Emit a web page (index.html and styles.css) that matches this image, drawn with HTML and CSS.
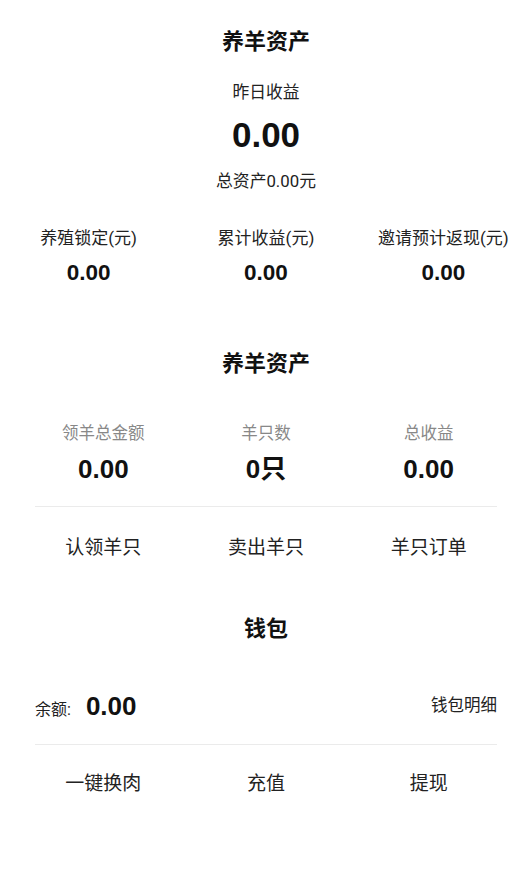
FILE: index.html
```html
<!DOCTYPE html>
<html lang="zh-CN">
<head>
<meta charset="utf-8">
<title>养羊资产</title>
<link rel="stylesheet" href="styles.css">
</head>
<body>
<div class="page">
  <section class="assets">
    <h1 class="title title-top">养羊资产</h1>
    <div class="sub">昨日收益</div>
    <div class="big">0.00</div>
    <div class="total">总资产0.00元</div>
    <div class="stats">
      <div class="stat">
        <div class="stat-label">养殖锁定(元)</div>
        <div class="stat-value">0.00</div>
      </div>
      <div class="stat">
        <div class="stat-label">累计收益(元)</div>
        <div class="stat-value">0.00</div>
      </div>
      <div class="stat">
        <div class="stat-label">邀请预计返现(元)</div>
        <div class="stat-value">0.00</div>
      </div>
    </div>
  </section>

  <section class="sheep">
    <h2 class="title title-second">养羊资产</h2>
    <div class="cols sheep-stats">
      <div class="col">
        <div class="col-label">领羊总金额</div>
        <div class="col-value">0.00</div>
      </div>
      <div class="col">
        <div class="col-label">羊只数</div>
        <div class="col-value">0只</div>
      </div>
      <div class="col">
        <div class="col-label">总收益</div>
        <div class="col-value">0.00</div>
      </div>
    </div>
    <div class="divider divider-sheep"></div>
    <div class="cols actions actions-sheep">
      <div class="action">认领羊只</div>
      <div class="action">卖出羊只</div>
      <div class="action">羊只订单</div>
    </div>
  </section>

  <section class="wallet">
    <h2 class="title title-wallet">钱包</h2>
    <div class="balance-row">
      <div class="balance">
        <span class="balance-label">余额:</span>
        <span class="balance-value">0.00</span>
      </div>
      <div class="wallet-detail">钱包明细</div>
    </div>
    <div class="divider divider-wallet"></div>
    <div class="cols actions actions-wallet">
      <div class="action">一键换肉</div>
      <div class="action">充值</div>
      <div class="action">提现</div>
    </div>
  </section>
</div>
</body>
</html>
```
FILE: styles.css
```css
html, body {
  margin: 0;
  padding: 0;
  background: #ffffff;
}

body {
  font-family: Roboto, "Noto Sans CJK SC", sans-serif;
  color: #222;
  width: 532px;
}

.page {
  display: flex;
  flex-direction: column;
  text-align: center;
}

.title {
  margin: 0;
  font-size: 22px;
  line-height: 30px;
  font-weight: bold;
  color: #111;
}

.title-top { margin-top: 27px; }

.sub {
  margin-top: 23px;
  font-size: 16.8px;
  line-height: 24px;
  color: #222;
}

.big {
  margin-top: 11px;
  font-family: "Liberation Sans", "Noto Sans CJK SC", sans-serif;
  font-size: 35px;
  line-height: 40px;
  font-weight: bold;
  color: #111;
}

.total {
  margin-top: 14px;
  font-size: 16.8px;
  line-height: 24px;
  color: #222;
}

.stats {
  margin-top: 33px;
  display: grid;
  grid-template-columns: repeat(3, 1fr);
}

.stat-label {
  font-size: 17px;
  line-height: 24px;
  color: #222;
}

.stat-value {
  margin-top: 8px;
  font-family: "Liberation Sans", "Noto Sans CJK SC", sans-serif;
  font-size: 22.5px;
  line-height: 30px;
  font-weight: bold;
  color: #111;
}

.title-second { margin-top: 61px; }

.cols {
  display: grid;
  grid-template-columns: repeat(3, 1fr);
  padding: 0 22px;
}

.sheep-stats { margin-top: 43px; }

.col-label {
  font-size: 16.5px;
  line-height: 24px;
  color: #888;
}

.col-value {
  margin-top: 7px;
  font-family: "Liberation Sans", "Noto Sans CJK SC", sans-serif;
  font-size: 26px;
  line-height: 32px;
  font-weight: bold;
  color: #111;
}

.divider {
  height: 1px;
  background: #ebebeb;
  margin: 0 35px;
}

.divider-sheep { margin-top: 21px; }

.actions .action {
  font-size: 19px;
  line-height: 26px;
  color: #222;
}

.actions-sheep { margin-top: 28px; }

.title-wallet { margin-top: 53px; }

.balance-row {
  margin-top: 46px;
  padding: 0 35px;
  height: 32px;
  display: flex;
  justify-content: space-between;
  align-items: center;
}

.balance {
  display: flex;
  align-items: baseline;
  gap: 15px;
}

.balance-label {
  font-size: 16px;
  color: #222;
}

.balance-value {
  font-family: "Liberation Sans", "Noto Sans CJK SC", sans-serif;
  font-size: 26px;
  line-height: 32px;
  font-weight: bold;
  color: #111;
}

.wallet-detail {
  font-size: 16.5px;
  line-height: 24px;
  color: #222;
}

.divider-wallet { margin-top: 22px; }

.actions-wallet { margin-top: 26px; }
```
